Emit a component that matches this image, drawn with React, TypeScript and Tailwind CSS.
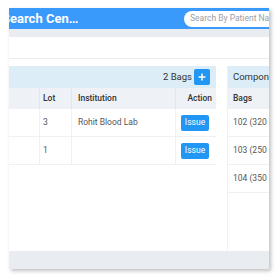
import { Plus } from 'lucide-react';

type Row = { lot: string; institution: string };

const rows: Row[] = [
  { lot: '3', institution: 'Rohit Blood Lab' },
  { lot: '1', institution: '' },
];

const bags = ['102 (320 (ml))', '103 (250 (ml))', '104 (350 (ml))'];

export default function App() {
  return (
    <div className="w-[277px] h-[277px] bg-white overflow-hidden pt-[8px] pl-[9px] font-['Roboto',sans-serif]">
      <div className="w-[260px] h-[261px] bg-white flex flex-col overflow-hidden shadow-[2px_2px_4px_rgba(0,0,0,0.25)]">
        {/* Header */}
        <div className="h-[21px] bg-[#3a9afc] flex items-center justify-between shrink-0">
          <div className="ml-[-7px] text-white font-bold text-[13px] leading-none whitespace-nowrap">
            Search Cen…
          </div>
          <div className="w-[85px] h-[16px] bg-white rounded-l-full flex items-center pl-[6px] text-[8.5px] text-[#9aa0a6] whitespace-nowrap overflow-hidden">
            Search By Patient Name
          </div>
        </div>
        <div className="h-[8px] bg-[#e9ecf1] shrink-0" />
        <div className="h-[22px] border-b border-[#e6eef3] shrink-0" />

        {/* Content */}
        <div className="flex gap-[11px] pt-[7px] flex-1">
          <div className="w-[207px] shrink-0">
            <div className="h-[22px] bg-[#dcedf8] flex items-center justify-end gap-[2px] pr-[6px] text-[9.5px] text-[#333]">
              <span>2 Bags</span>
              <span className="w-[16px] h-[16px] bg-[#2196f3] rounded-[2px] flex items-center justify-center">
                <Plus className="w-[10px] h-[10px] text-white" strokeWidth={3.5} />
              </span>
            </div>
            <div className="h-[21px] bg-[#eef1f5] flex text-[8.5px] text-[#333] font-medium">
              <div className="w-[31px] border-r border-[#e3e7ec]" />
              <div className="w-[32px] border-r border-[#e3e7ec] flex items-center pl-[3px]">Lot</div>
              <div className="w-[104px] border-r border-[#e3e7ec] flex items-center pl-[6px]">Institution</div>
              <div className="flex-1 flex items-center justify-end pr-[4px]">Action</div>
            </div>
            {rows.map((r) => (
              <div key={r.lot} className="h-[28px] flex text-[8.5px] text-[#555] border-b border-[#eef0f3]">
                <div className="w-[31px] border-r border-[#eef0f3]" />
                <div className="w-[32px] border-r border-[#eef0f3] flex items-center pl-[3px]">{r.lot}</div>
                <div className="w-[104px] border-r border-[#eef0f3] flex items-center pl-[6px]">{r.institution}</div>
                <div className="flex-1 flex items-center justify-end pr-[7px]">
                  <span className="w-[28px] h-[16px] bg-[#2196f3] rounded-[2px] text-white text-[8.5px] flex items-center justify-center">
                    Issue
                  </span>
                </div>
              </div>
            ))}
          </div>

          <div className="flex-1 border-l border-[#eef0f3] overflow-hidden">
            <div className="h-[22px] bg-[#dcedf8] flex items-center pl-[5px] text-[9.5px] text-[#333] whitespace-nowrap">
              Components
            </div>
            <div className="h-[21px] bg-[#eef1f5] flex items-center pl-[5px] text-[8.5px] text-[#333] font-medium">
              Bags
            </div>
            {bags.map((b) => (
              <div key={b} className="h-[28px] flex items-center pl-[5px] text-[8.5px] text-[#555] whitespace-nowrap border-b border-[#eef0f3]">
                {b}
              </div>
            ))}
          </div>
        </div>

        <div className="h-[18px] bg-[#e9edf2] shrink-0" />
      </div>
    </div>
  );
}
